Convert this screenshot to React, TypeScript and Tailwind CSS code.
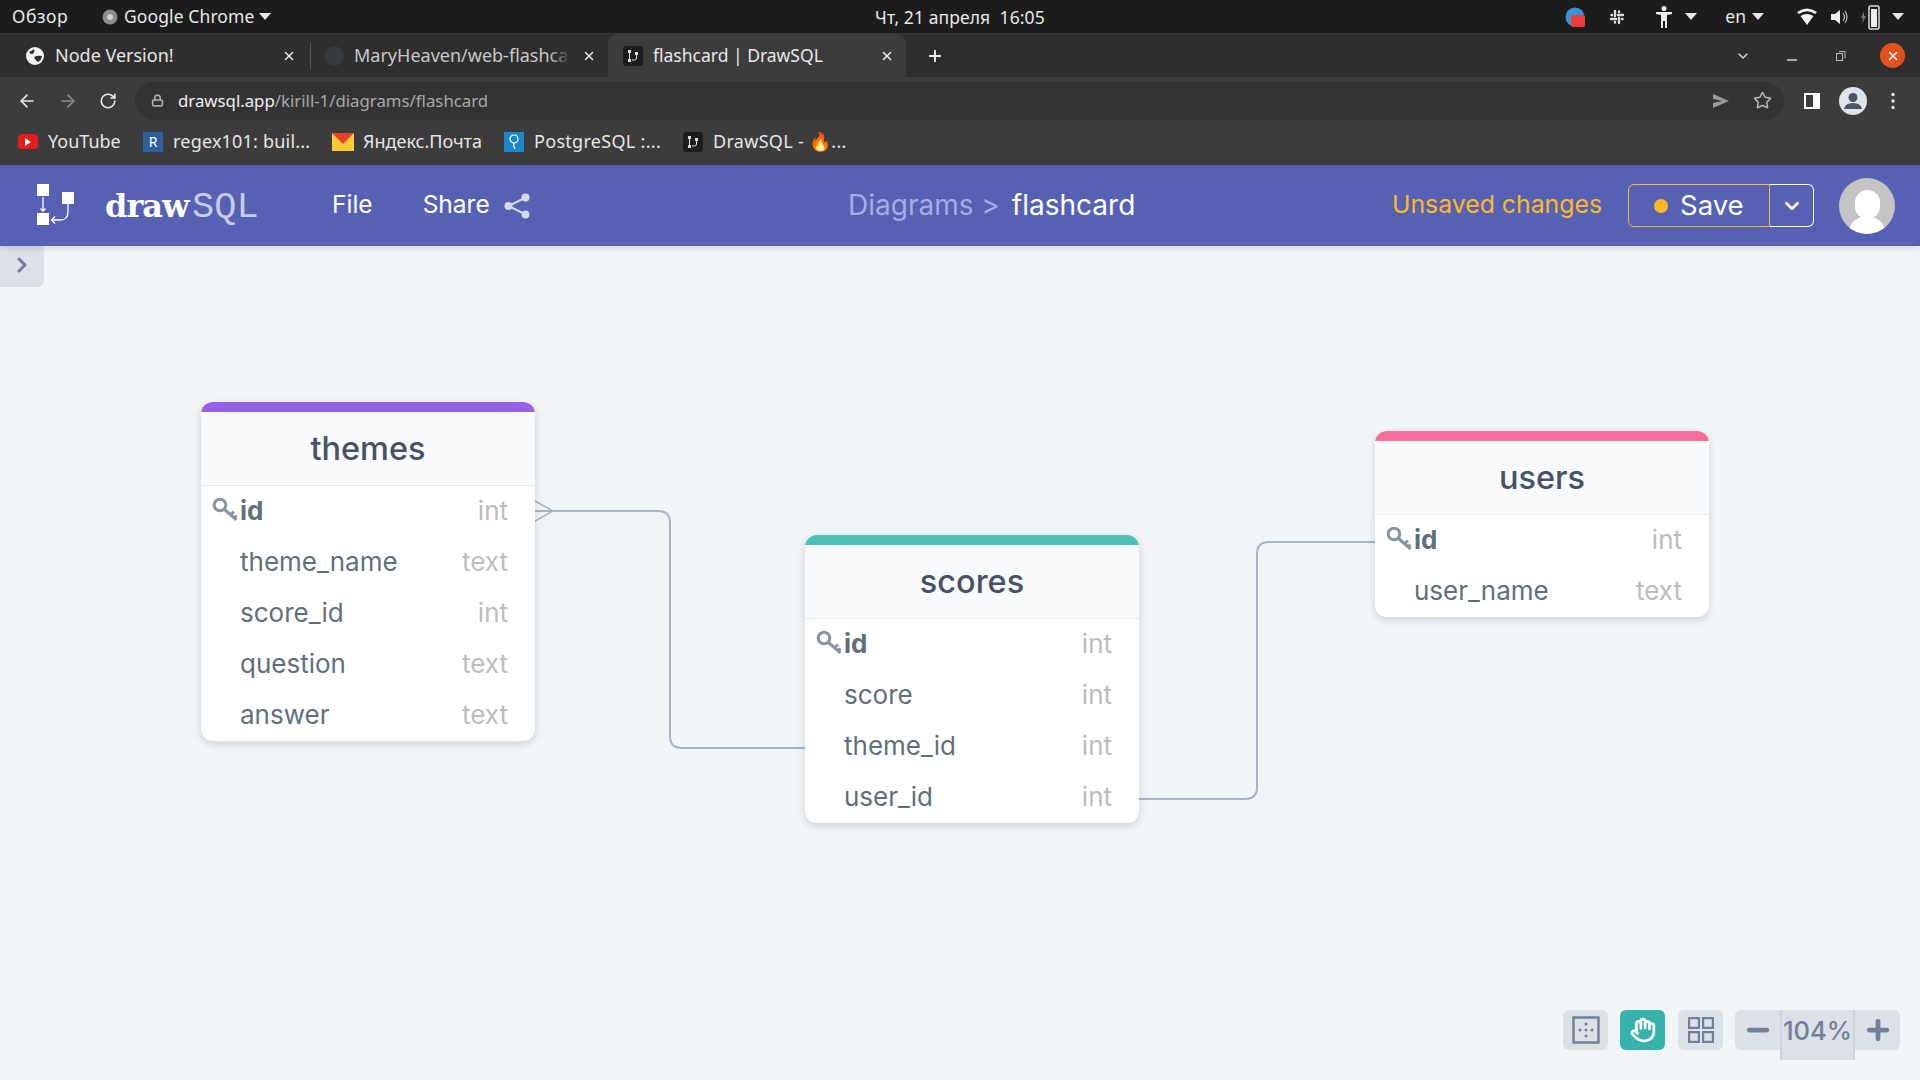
import React from 'react'
import { ArrowLeft, ArrowRight, ChevronDown, ChevronRight, Hand, Lock, Minus, Plus, RotateCw, Star, X } from 'lucide-react'

const chromeFont = "font-['Noto_Sans',sans-serif]"

function Caret({ className = '' }: { className?: string }) {
    return <span className={"w-0 h-0 border-l-[6px] border-r-[6px] border-t-[7px] border-l-transparent border-r-transparent border-t-[#e8e8e8] " + className}></span>
}

function DrawIcon() {
    return <span className="w-[20px] h-[20px] rounded-[3px] bg-[#1c1c1c] flex items-center justify-center shrink-0">
        <svg width="14" height="14" viewBox="0 0 14 14" fill="#ddd">
            <rect x="2" y="1" width="3" height="3" />
            <rect x="2" y="10" width="3" height="3" />
            <rect x="9" y="3" width="3" height="3" />
            <path d="M3.5 4v6M10.5 6v3q0 2-2 2H6" stroke="#ddd" fill="none" />
        </svg>
    </span>
}

function TopBar() {
    return <div className={"h-[34px] bg-[#1c1c1c] border-b border-[#3a3a3a] flex items-center relative text-[#e8e8e8] text-[17.5px] shrink-0 " + chromeFont}>
        <span className="ml-[12px] w-[90px] tracking-[0.6px]">Обзор</span>
        <svg width="16" height="16" viewBox="0 0 16 16" className="mr-[6px]"><circle cx="8" cy="8" r="7.5" fill="#8d8d8d" /><circle cx="8" cy="8" r="3" fill="#d0d0d0" /></svg>
        <span className="tracking-[0.1px]">Google Chrome</span>
        <Caret className="ml-[5px]" />
        <span className="absolute left-[875px] top-[4px] tracking-[0.1px]">Чт, 21 апреля&nbsp; 16:05</span>
        <div className="ml-auto flex items-center h-full">
            <svg width="20" height="20" viewBox="0 0 20 20" className="mr-[24px]">
                <circle cx="10" cy="10" r="9.5" fill="#2f97d8" />
                <path d="M6 8h12q2 0 2 2v8q0 2-2 2H8q-2 0-2-2z" fill="#ef3b3b" />
            </svg>
            <svg width="16" height="16" viewBox="0 0 16 16" stroke="#ddd" strokeWidth="2.400" strokeLinecap="round" className="mr-[30px]">
                <path d="M6 2v5M10 9v5M2 10h5M9 6h5M10 2.500v.5M6 13v.5M2.500 6h.5M13 10h.5" />
            </svg>
            <svg width="18" height="24" viewBox="0 0 18 24" fill="#eee" className="mr-[12px]">
                <circle cx="9" cy="3.500" r="2.500" />
                <path d="M1 7h16v2l-5 1v13h-2v-7H8v7H6V10L1 9z" />
            </svg>
            <Caret className="mr-[28px]" />
            <span className="mr-[6px]">en</span>
            <Caret className="mr-[33px]" />
            <svg width="20" height="18" viewBox="0 0 20 18" fill="#f2f2f2" className="mr-[12px]">
                <path d="M0 4q10-7 20 0l-1.800 2q-8.200-5.500-16.400 0z" />
                <path d="M3.500 8q6.500-4 13 0L10 17z" />
            </svg>
            <svg width="20" height="20" viewBox="0 0 20 20" fill="#eee" className="mr-[12px]">
                <path d="M2 7h4l5-4v14l-5-4H2z" />
                <path d="M14 6q3 4 0 8M16 4q4 6 0 12" stroke="#bbb" fill="none" strokeWidth="1.200" />
            </svg>
            <svg width="20" height="28" viewBox="0 0 20 28" className="mr-[11px]">
                <path d="M3 8L0 15h2l-1 6 4-8H3z" fill="#777" />
                <rect x="8" y="3" width="10" height="23" rx="1.500" fill="none" stroke="#ddd" strokeWidth="1.500" />
                <rect x="10" y="6" width="6" height="18" fill="#eee" />
            </svg>
            <Caret className="mr-[16px]" />
        </div>
    </div>
}

function TabsRow() {
    return <div className={"h-[43px] bg-[#2e2e2e] flex items-center relative text-[18px] shrink-0 " + chromeFont}>
        <div className="w-[310px] h-full flex items-center pl-[26px] text-[#e6e6e6]">
            <svg width="18" height="18" viewBox="0 0 18 18" className="mr-[11px]">
                <circle cx="9" cy="9" r="9" fill="#f2f2f2" />
                <path d="M3 5q3-1 5-3 1 3-1 4.500T3 5zM8 10q4-2 8-1-1 5-4 6-3-2-4-5z" fill="#2e2e2e" />
            </svg>
            <span>Node Version!</span>
            <X size={14} strokeWidth={2.500} className="ml-auto mr-[14px] text-[#eee]" />
        </div>
        <span className="w-px h-[26px] bg-[#555]"></span>
        <div className="w-[297px] h-full flex items-center pl-[12px] text-[#c8c8c8]">
            <svg width="22" height="22" viewBox="0 0 22 22" className="mr-[9px]"><circle cx="11" cy="11" r="10" fill="#333a40" /></svg>
            <div className="relative w-[216px] overflow-hidden">
                <span className="whitespace-nowrap">MaryHeaven/web-flashca</span>
                <span className="absolute right-0 top-0 w-[20px] h-full bg-gradient-to-r from-transparent to-[#2e2e2e]"></span>
            </div>
            <X size={14} strokeWidth={2.500} className="ml-[12px] text-[#eee]" />
        </div>
        <div className="w-[298px] h-full bg-[#3c3c3c] rounded-t-[10px] flex items-center pl-[15px] text-[#e8e8e8] text-[17.5px]">
            <DrawIcon />
            <span className="ml-[10px]">flashcard | DrawSQL</span>
            <X size={14} strokeWidth={2.500} className="ml-auto mr-[12px] text-[#eee]" />
        </div>
        <Plus size={18} strokeWidth={2.500} className="ml-[20px] text-[#eee]" />
        <ChevronDown size={16} strokeWidth={2} className="absolute left-[1735px] top-[14px] text-[#ddd]" />
        <span className="absolute left-[1787px] top-[25px] w-[10px] h-[2px] bg-[#aaa]"></span>
        <svg width="12" height="12" viewBox="0 0 12 12" fill="none" stroke="#bbb" className="absolute left-[1835px] top-[16px]">
            <rect x="1.500" y="3.500" width="6" height="7" />
            <path d="M4 1.500h6v7" />
        </svg>
        <div className="absolute left-[1880px] top-[9px] w-[25px] h-[25px] rounded-full bg-[#e2521d] flex items-center justify-center">
            <X size={14} strokeWidth={2.500} className="text-white" />
        </div>
    </div>
}

function AddressRow() {
    return <div className="h-[47px] bg-[#3c3c3c] flex items-center relative shrink-0">
        <ArrowLeft size={20} className="ml-[17px] text-[#e8e8e8]" />
        <ArrowRight size={20} className="ml-[21px] text-[#8a8a8a]" />
        <RotateCw size={18} strokeWidth={2.200} className="ml-[21px] text-[#e8e8e8]" />
        <div className={"ml-[18px] w-[1649px] h-[38px] rounded-full bg-[#333333] flex items-center pl-[16px] text-[16.8px] " + chromeFont}>
            <Lock size={13} strokeWidth={3} className="text-[#aaa] mr-[14px]" />
            <span className="text-[#f0f0f0]">drawsql.app</span>
            <span className="text-[#a8a8a8]">/kirill-1/diagrams/flashcard</span>
            <svg width="18" height="18" viewBox="0 0 18 18" fill="#9a9a9a" className="ml-auto"><path d="M1 2l16 7-16 7 0-5 9-2-9-2z" /></svg>
            <Star size={19} strokeWidth={2} className="ml-[23px] mr-[12px] text-[#b5b5b5]" />
        </div>
        <svg width="18" height="18" viewBox="0 0 18 18" className="ml-[19px]"><path d="M1 1h16v16H1z" fill="#fff" /><rect x="3" y="3" width="7" height="12" fill="#3c3c3c" /></svg>
        <svg width="28" height="28" viewBox="0 0 28 28" className="ml-[18px]">
            <circle cx="14" cy="14" r="14" fill="#dfe3ea" />
            <circle cx="14" cy="10.500" r="4.500" fill="#4a5568" />
            <path d="M5 22q1-6 9-6t9 6z" fill="#4a5568" />
        </svg>
        <svg width="4" height="18" viewBox="0 0 4 18" fill="#e8e8e8" className="ml-[24px]">
            <circle cx="2" cy="2.500" r="1.700" /><circle cx="2" cy="9" r="1.700" /><circle cx="2" cy="15.500" r="1.700" />
        </svg>
    </div>
}

function BookmarksRow() {
    return <div className={"h-[41px] bg-[#3c3c3c] flex items-center text-[#e6e6e6] text-[18px] pl-[18px] pb-[6px] shrink-0 " + chromeFont}>
        <span className="w-[20px] h-[15px] rounded-[4px] bg-[#e81c1c] flex items-center justify-center shrink-0">
            <span className="w-0 h-0 border-y-[4px] border-l-[6px] border-y-transparent border-l-white"></span>
        </span>
        <span className="ml-[10px] w-[95px]">YouTube</span>
        <span className="w-[20px] h-[20px] bg-[#2e5f9e] text-white text-[14px] flex items-center justify-center shrink-0">R</span>
        <span className="ml-[10px] w-[159px] tracking-[0.2px]">regex101: buil...</span>
        <svg width="22" height="18" viewBox="0 0 22 18" className="shrink-0">
            <rect width="22" height="18" fill="#ffcc33" />
            <path d="M0 0h22L11 11z" fill="#e8402a" />
        </svg>
        <span className="ml-[9px] w-[141px]">Яндекс.Почта</span>
        <span className="w-[20px] h-[20px] bg-[#1d87c9] flex items-center justify-center shrink-0">
            <svg width="12" height="18" viewBox="0 0 12 18" fill="none" stroke="#fff" strokeWidth="1.200"><circle cx="6" cy="6" r="4" /><path d="M6 10q-1 3 1 6" /></svg>
        </span>
        <span className="ml-[10px] w-[149px] tracking-[0.3px]">PostgreSQL :...</span>
        <DrawIcon />
        <span className="ml-[10px] tracking-[0.3px]">DrawSQL - 🔥...</span>
    </div>
}

function AppHeader() {
    return <div className="h-[81px] bg-[#5661b3] flex items-center relative font-['Inter',sans-serif] shrink-0 shadow-[0_2px_6px_rgba(0,0,0,0.12)] z-10">
        <svg width="40" height="44" viewBox="0 0 40 44" className="ml-[37px]" fill="#fff">
            <rect x="0" y="0" width="12" height="12" />
            <rect x="0" y="29" width="12" height="12" />
            <rect x="25" y="8" width="12" height="12" />
            <path d="M6 13v14M3.500 24.500L6 27l2.500-2.500" stroke="#fff" strokeWidth="1.300" fill="none" />
            <path d="M31 20v8q0 8-8 8h-8M18 32.500L14.500 36l3.500 3.500" stroke="#fff" strokeWidth="1.300" fill="none" />
        </svg>
        <span className="ml-[28px] text-[32px] leading-none font-bold text-white font-['DejaVu_Serif',serif] tracking-[-1px] w-[87px]">draw</span>
        <span className="mt-[3px] text-[37px] leading-none text-[#c6cbe8] font-['Liberation_Mono',monospace] w-[70px]">SQL</span>
        <span className="ml-[70px] -mt-[2px] text-[24.5px] text-white">File</span>
        <span className="ml-[50px] -mt-[2px] text-[24.5px] text-white">Share</span>
        <svg width="26" height="26" viewBox="0 0 26 26" className="ml-[14px]" stroke="#d5dae8" fill="#d5dae8" strokeWidth="2">
            <circle cx="21.500" cy="4.500" r="3" /><circle cx="4.500" cy="13" r="3" /><circle cx="21.500" cy="21.500" r="3" />
            <path d="M21.500 4.500L4.500 13l17 8.500" fill="none" />
        </svg>
        <div className="absolute left-[848px] top-[22px] flex items-center text-[28px] leading-[37px]">
            <span className="text-[#a5ace6]">Diagrams &gt;</span>
            <span className="ml-[12px] text-white">flashcard</span>
        </div>
        <div className="ml-auto flex items-center">
            <span className="text-[24.8px] text-[#fdb924] -mt-[2px]">Unsaved changes</span>
            <div className="ml-[26px] w-[142px] h-[43px] rounded-l-[6px] border border-[#fdb924] flex items-center pl-[25px]">
                <span className="w-[14px] h-[14px] rounded-full bg-[#fdb924]"></span>
                <span className="ml-[12px] text-[27.5px] text-white">Save</span>
            </div>
            <div className="w-[44px] h-[43px] rounded-r-[6px] border border-l-0 border-white flex items-center justify-center">
                <ChevronDown size={22} strokeWidth={3} className="text-white" />
            </div>
            <div className="ml-[25px] mr-[25px] w-[56px] h-[56px] rounded-full bg-[#c4c4c4] overflow-hidden flex flex-col items-center">
                <span className="mt-[12px] w-[25px] h-[29px] rounded-full bg-white shrink-0"></span>
                <span className="-mt-[3px] w-[38px] h-[30px] rounded-t-full bg-white shrink-0"></span>
            </div>
        </div>
    </div>
}

function KeyIcon() {
    return <svg width="26" height="24" viewBox="0 0 26 24" fill="none" stroke="#8795a1" strokeWidth="3" className="absolute left-[11px] top-[11px]">
        <circle cx="8" cy="8" r="5.800" />
        <path d="M12.500 12.500L24.500 23M18.500 18l3.500-3.500M22 21l2.500-2.500" />
    </svg>
}

type Field = { name: string, type: string, pk?: boolean }

function DbTable({ title, fields, accent, pos }: { title: string, fields: Field[], accent: string, pos: string }) {
    return <div className={"absolute w-[334px] rounded-[12px] bg-white shadow-[0_3px_8px_rgba(0,0,0,0.14)] overflow-hidden font-['Inter',sans-serif] " + pos}>
        <div className={"h-[10px] " + accent}></div>
        <div className="h-[74px] pt-[1px] bg-[#f8fafc] border-b border-[#e4e8f0] flex items-center justify-center text-[32.5px] font-medium text-[#475266]">{title}</div>
        {fields.map((f) => <div key={f.name} className="relative h-[51px] flex items-center justify-between pl-[39px] pr-[27px] pb-[2px] text-[26px]">
            {f.pk && <KeyIcon />}
            <span className={f.pk ? "font-bold text-[#606f7b]" : "text-[#606f7b]"}>{f.name}</span>
            <span className="text-[#bdbdbd]">{f.type}</span>
        </div>)}
    </div>
}

function Connections() {
    return <svg width="1920" height="834" viewBox="0 246 1920 834" fill="none" stroke="#a5b3c6" strokeWidth="2" className="absolute left-0 top-0">
        <path d="M535 511H658q12 0 12 12V736q0 12 12 12H806" />
        <path d="M535 501L553 511L535 521" strokeWidth="1.500" />
        <path d="M1139 799H1245q12 0 12-12V554q0-12 12-12H1375" />
    </svg>
}

function ZoomTools() {
    return <div className="absolute left-[1563px] top-[764px] flex items-start text-[#718096] font-['Inter',sans-serif]">
        <div className="w-[45px] h-[40px] rounded-[6px] bg-[#dae1e7] flex items-center justify-center">
            <svg width="28" height="28" viewBox="0 0 28 28" fill="#718096">
                <path d="M1.500 1.500h25v25h-25z" fill="none" stroke="#718096" strokeWidth="2.400" />
                <circle cx="14" cy="8" r="1.500" /><circle cx="8" cy="14" r="1.500" /><circle cx="14" cy="14" r="1.500" /><circle cx="20" cy="14" r="1.500" /><circle cx="14" cy="20" r="1.500" />
            </svg>
        </div>
        <div className="ml-[12px] w-[45px] h-[40px] rounded-[6px] bg-[#38b2ac] flex items-center justify-center">
            <Hand size={26} strokeWidth={2.500} className="text-white" />
        </div>
        <div className="ml-[13px] w-[45px] h-[40px] rounded-[6px] bg-[#dae1e7] flex items-center justify-center">
            <svg width="26" height="26" viewBox="0 0 26 26" fill="none" stroke="#718096" strokeWidth="2.200">
                <rect x="1.100" y="1.100" width="9.800" height="9.800" /><rect x="15.100" y="1.100" width="9.800" height="9.800" />
                <rect x="1.100" y="15.100" width="9.800" height="9.800" /><rect x="15.100" y="15.100" width="9.800" height="9.800" />
            </svg>
        </div>
        <div className="ml-[12px] flex items-start">
            <div className="w-[45px] h-[40px] rounded-l-[6px] bg-[#dae1e7] flex items-center justify-center">
                <Minus size={30} strokeWidth={3.800} />
            </div>
            <div className="w-[75px] h-[50px] bg-[#dae1e7] border-x-2 border-[#c9d5e0] flex justify-center pt-[3px] text-[25.5px] leading-[36px] font-medium">104%</div>
            <div className="w-[45px] h-[40px] rounded-r-[6px] bg-[#dae1e7] flex items-center justify-center">
                <Plus size={30} strokeWidth={3.800} />
            </div>
        </div>
    </div>
}

function App() {
    return <div className="w-[1920px] h-[1080px] flex flex-col overflow-hidden">
        <TopBar />
        <TabsRow />
        <AddressRow />
        <BookmarksRow />
        <AppHeader />
        <div className="relative flex-1 bg-[#f1f5f8] overflow-hidden">
            <div className="absolute left-0 top-0 w-[44px] h-[41px] bg-[#dae1e7] rounded-br-[6px] flex items-center justify-center pb-[3px]">
                <ChevronRight size={24} strokeWidth={3} className="text-[#718096]" />
            </div>
            <Connections />
            <DbTable title="themes" accent="bg-[#9561e2]" pos="left-[201px] top-[156px]" fields={[
                { name: 'id', type: 'int', pk: true },
                { name: 'theme_name', type: 'text' },
                { name: 'score_id', type: 'int' },
                { name: 'question', type: 'text' },
                { name: 'answer', type: 'text' },
            ]} />
            <DbTable title="scores" accent="bg-[#4dc0b5]" pos="left-[805px] top-[289px]" fields={[
                { name: 'id', type: 'int', pk: true },
                { name: 'score', type: 'int' },
                { name: 'theme_id', type: 'int' },
                { name: 'user_id', type: 'int' },
            ]} />
            <DbTable title="users" accent="bg-[#f66d9b]" pos="left-[1375px] top-[185px]" fields={[
                { name: 'id', type: 'int', pk: true },
                { name: 'user_name', type: 'text' },
            ]} />
            <ZoomTools />
        </div>
    </div>
}

export default App
